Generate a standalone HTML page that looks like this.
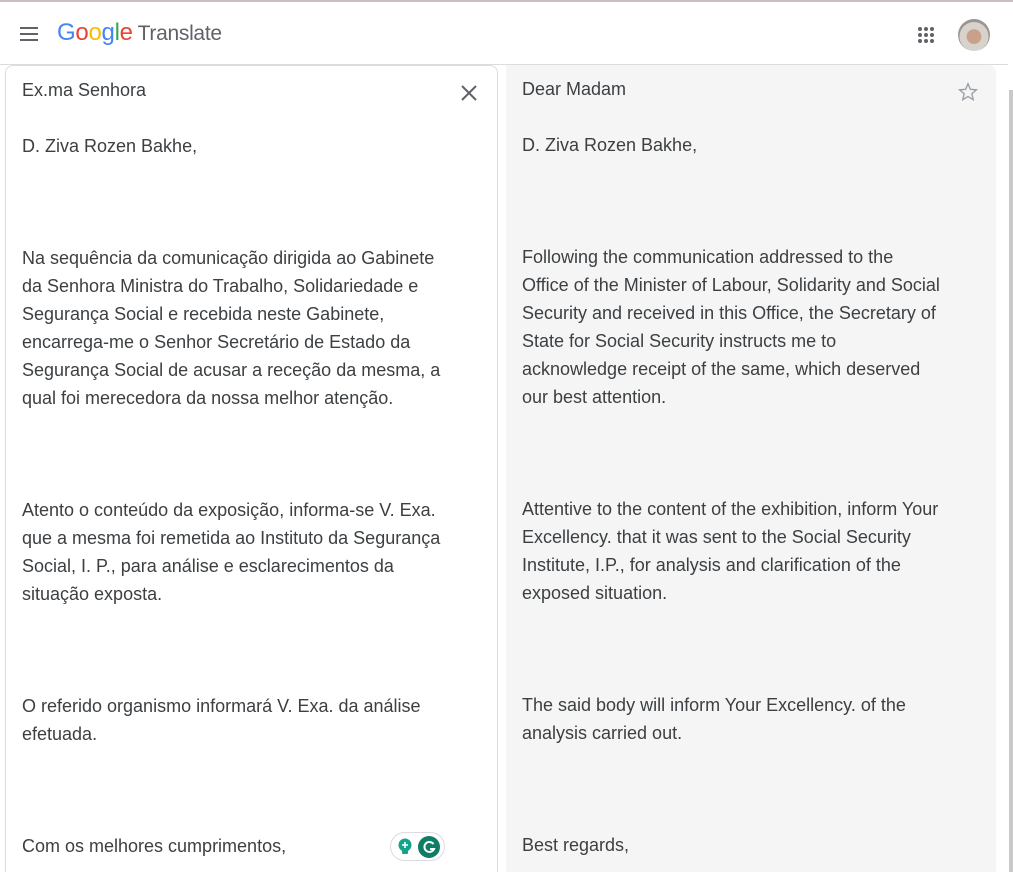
<!DOCTYPE html>
<html><head><meta charset="utf-8"><style>
*{margin:0;padding:0;box-sizing:border-box}
html,body{width:1013px;height:872px;overflow:hidden}
body{background:#fff;font-family:"Liberation Sans",Arial,sans-serif;position:relative}
.topline{position:absolute;left:0;top:0;width:1013px;height:2px;background:#c9bfbf}
.hdr{position:absolute;left:0;top:2px;width:1008px;height:63px;border-bottom:1px solid #dadce0}
.menu{position:absolute;left:20px;top:25px;width:18px}
.menu i{display:block;height:2px;background:#5f6368;margin-bottom:4px}
.logo{position:absolute;left:57px;top:17px;font-size:24px;letter-spacing:-0.3px}
.logo .t{color:#5f6368;margin-left:5px;font-size:21px}
.grid{position:absolute;left:918px;top:25px;width:16px;height:16px}
.grid i{position:absolute;width:4px;height:4px;border-radius:50%;background:#5f6368}
.av{position:absolute;left:958px;top:17px;width:32px;height:32px;border-radius:50%;background:radial-gradient(circle at 50% 55%,#c9a08a 0 30%,#d8d2cc 32% 60%,#9c948e 62%)}
.lp{position:absolute;left:5px;top:65px;width:493px;height:807px;border:1px solid #dadce0;border-bottom:none;border-radius:8px 8px 0 0}
.rp{position:absolute;left:506px;top:65px;width:490px;height:807px;background:#f5f5f5;border-radius:0 8px 0 0}
.sb{position:absolute;left:1009px;top:90px;width:4px;height:782px;background:#c9c9c9}
.txt{position:absolute;top:76px;font-size:18px;line-height:28px;color:#3c4043;white-space:nowrap}
.x{position:absolute;left:459px;top:83px;width:20px;height:20px}
.star{position:absolute;left:957px;top:81px}
.gr{position:absolute;left:390px;top:832px;width:55px;height:29px;border:1px solid #dadce0;border-radius:15px;background:#fff}
</style></head><body>
<div class="topline"></div>
<div class="hdr">
<div class="menu"><i></i><i></i><i></i></div>
<div class="logo"><span style="color:#4285f4">G</span><span style="color:#ea4335">o</span><span style="color:#fbbc05">o</span><span style="color:#4285f4">g</span><span style="color:#34a853">l</span><span style="color:#ea4335">e</span><span class="t">Translate</span></div>
<div class="grid"><i style="left:0;top:0"></i><i style="left:6px;top:0"></i><i style="left:12px;top:0"></i><i style="left:0;top:6px"></i><i style="left:6px;top:6px"></i><i style="left:12px;top:6px"></i><i style="left:0;top:12px"></i><i style="left:6px;top:12px"></i><i style="left:12px;top:12px"></i></div>
<div class="av"></div>
</div>
<div class="lp"></div>
<div class="rp"></div>
<div class="sb"></div>
<svg class="x" viewBox="0 0 20 20"><path d="M3 3L17 17M17 3L3 17" stroke="#5f6368" stroke-width="2"/></svg>
<svg class="star" width="22" height="22" viewBox="0 0 24 24"><path d="M12 3l2.6 6.1 6.6.5-5 4.3 1.5 6.5L12 17l-5.7 3.4 1.5-6.5-5-4.3 6.6-.5z" fill="none" stroke="#9aa0a6" stroke-width="1.5"/></svg>
<div class="txt" style="left:22px">Ex.ma Senhora<br><br>D. Ziva Rozen Bakhe,<br><br><br><br>Na sequência da comunicação dirigida ao Gabinete<br>da Senhora Ministra do Trabalho, Solidariedade e<br>Segurança Social e recebida neste Gabinete,<br>encarrega-me o Senhor Secretário de Estado da<br>Segurança Social de acusar a receção da mesma, a<br>qual foi merecedora da nossa melhor atenção.<br><br><br><br>Atento o conteúdo da exposição, informa-se V. Exa.<br>que a mesma foi remetida ao Instituto da Segurança<br>Social, I. P., para análise e esclarecimentos da<br>situação exposta.<br><br><br><br>O referido organismo informará V. Exa. da análise<br>efetuada.<br><br><br><br>Com os melhores cumprimentos,</div>
<div class="txt" style="left:522px;top:75px">Dear Madam<br><br>D. Ziva Rozen Bakhe,<br><br><br><br>Following the communication addressed to the<br>Office of the Minister of Labour, Solidarity and Social<br>Security and received in this Office, the Secretary of<br>State for Social Security instructs me to<br>acknowledge receipt of the same, which deserved<br>our best attention.<br><br><br><br>Attentive to the content of the exhibition, inform Your<br>Excellency. that it was sent to the Social Security<br>Institute, I.P., for analysis and clarification of the<br>exposed situation.<br><br><br><br>The said body will inform Your Excellency. of the<br>analysis carried out.<br><br><br><br>Best regards,</div>
<div class="gr">
<svg style="position:absolute;left:6px;top:5px" width="16" height="18" viewBox="0 0 16 18"><circle cx="8" cy="7" r="6.5" fill="#15a38b"/><rect x="5" y="12" width="6" height="4" rx="1" fill="#15a38b"/><path d="M8 4v6M5 7h6" stroke="#fff" stroke-width="1.6"/></svg>
<svg style="position:absolute;left:27px;top:3px" width="22" height="22" viewBox="0 0 22 22"><circle cx="11" cy="11" r="11" fill="#0f7d66"/><path d="M15.5 8A5 5 0 1 0 16 13h-4" fill="none" stroke="#fff" stroke-width="2"/></svg>
</div>
</body></html>
